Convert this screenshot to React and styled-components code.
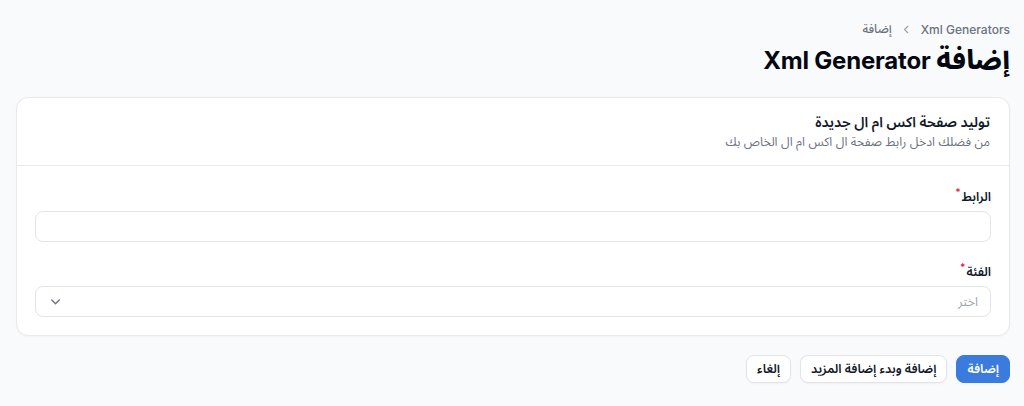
import React from "react";
import styled, { createGlobalStyle } from "styled-components";

const GlobalStyle = createGlobalStyle`
  html, body {
    margin: 0;
    padding: 0;
    background: #f9fafb;
  }
  body {
    font-family: Inter, "Noto Sans Arabic", "Noto Kufi Arabic", "DejaVu Sans", sans-serif;
    color: #111827;
  }
  * { box-sizing: border-box; }
`;

const Page = styled.div`
  direction: rtl;
  padding: 20px 14px 20px 16px;
`;

const Breadcrumbs = styled.nav`
  display: flex;
  align-items: center;
  gap: 8px;
  font-size: 12px;
  font-weight: 500;
  color: #6b7280;
  height: 18px;
`;

const Title = styled.h1`
  margin: 6px 0 0;
  font-size: 24px;
  line-height: 32px;
  height: 32px;
  font-weight: 700;
  letter-spacing: -0.2px;
  color: #030712;
`;

const TitleWord = styled.span`
  font-size: 27px;
  font-weight: 800;
  letter-spacing: 0;
`;

const Card = styled.section`
  margin-top: 21px;
  background: #fff;
  border: 1px solid #e8e9ec;
  border-radius: 12px;
  box-shadow: 0 1px 2px rgba(0, 0, 0, 0.03);
`;

const CardHeader = styled.header`
  padding: 14px 19px 13px;
  border-bottom: 1px solid #e8e9ec;
`;

const CardTitle = styled.h2`
  margin: 0;
  font-size: 14.2px;
  line-height: 20px;
  height: 20px;
  font-weight: 600;
  color: #111827;
`;

const CardSubtitle = styled.p`
  margin: 0;
  font-size: 12.4px;
  line-height: 20px;
  height: 20px;
  color: #6b7280;
`;

const CardBody = styled.div`
  display: grid;
  gap: 20px;
  padding: 21px 18px 18px;
`;

const Field = styled.div`
  display: grid;
  gap: 4px;
`;

const Label = styled.label`
  display: block;
  height: 20px;
  font-size: 12.5px;
  line-height: 20px;
  font-weight: 600;
  color: #111827;
  sup {
    color: #e11d48;
    font-size: 10px;
    line-height: 0;
    margin-right: 1px;
  }
`;

const InputBox = styled.div`
  height: 31px;
  border: 1px solid #e3e4e8;
  border-radius: 8px;
  background: #fff;
  display: flex;
  align-items: center;
  justify-content: space-between;
  padding: 0 12px;
  font-size: 12.5px;
  color: #9ca3af;
`;

const Actions = styled.div`
  display: flex;
  gap: 9px;
  margin-top: 19px;
`;

const Button = styled.button`
  height: 28px;
  padding: 0 10px;
  border-radius: 8px;
  font-family: inherit;
  font-size: 12.5px;
  font-weight: 600;
  border: 1px solid ${(p) => (p.$primary ? "#3a7bdd" : "#e3e4e8")};
  background: ${(p) => (p.$primary ? "#3a7bdd" : "#fff")};
  color: ${(p) => (p.$primary ? "#fff" : "#111827")};
  box-shadow: 0 1px 2px rgba(0, 0, 0, 0.04);
`;

const Chevron = ({ d, size = 14, color = "#9ca3af" }) => (
  <svg width={size} height={size} viewBox="0 0 20 20" fill="none" stroke={color} strokeWidth="1.8" strokeLinecap="round" strokeLinejoin="round">
    <path d={d} />
  </svg>
);

export default function App() {
  return (
    <>
      <GlobalStyle />
      <Page>
        <Breadcrumbs>
          <span>Xml Generators</span>
          <Chevron d="M12 5l-5 5 5 5" size={13} />
          <span>إضافة</span>
        </Breadcrumbs>
        <Title>
          <TitleWord>إضافة</TitleWord> Xml Generator
        </Title>

        <Card>
          <CardHeader>
            <CardTitle>توليد صفحة اكس ام ال جديدة</CardTitle>
            <CardSubtitle>من فضلك ادخل رابط صفحة ال اكس ام ال الخاص بك</CardSubtitle>
          </CardHeader>
          <CardBody>
            <Field>
              <Label>
                الرابط<sup>*</sup>
              </Label>
              <InputBox />
            </Field>
            <Field>
              <Label>
                الفئة<sup>*</sup>
              </Label>
              <InputBox>
                <span>اختر</span>
                <Chevron d="M5 8l5 5 5-5" size={15} color="#6b7280" />
              </InputBox>
            </Field>
          </CardBody>
        </Card>

        <Actions>
          <Button $primary>إضافة</Button>
          <Button>إضافة وبدء إضافة المزيد</Button>
          <Button>إلغاء</Button>
        </Actions>
      </Page>
    </>
  );
}
